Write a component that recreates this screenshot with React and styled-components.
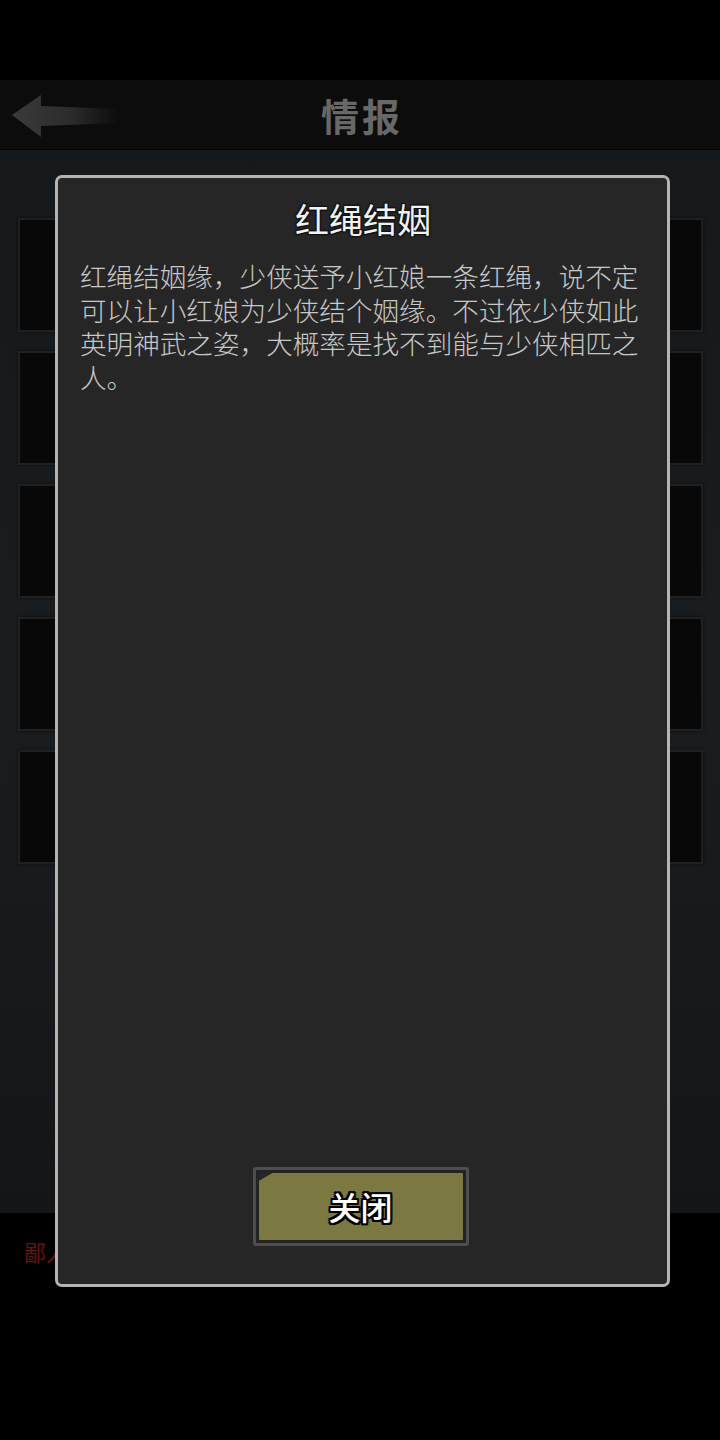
import styled, { createGlobalStyle } from 'styled-components'

const GlobalStyle = createGlobalStyle`
  html, body {
    margin: 0;
    padding: 0;
    background: #000;
  }
  * { box-sizing: border-box; }
`

const cjk = `"Noto Sans CJK SC", "Noto Sans", sans-serif`

const Screen = styled.div`
  position: relative;
  width: 720px;
  height: 1440px;
  display: flex;
  flex-direction: column;
  background: #000;
  overflow: hidden;
  font-family: ${cjk};
`

const StatusGap = styled.div`
  height: 80px;
  background: #000;
`

const Header = styled.div`
  height: 70px;
  display: flex;
  align-items: center;
  justify-content: center;
  position: relative;
  background: #0c0c0d;
  border-bottom: 1px solid #050505;
`

const BackButton = styled.div`
  position: absolute;
  left: 10px;
  top: 14px;
  width: 110px;
  height: 46px;
`

const Title = styled.h1`
  margin: 0 0 0 4px;
  font-size: 38px;
  font-weight: 700;
  letter-spacing: 3px;
  color: #686868;
`

const Content = styled.div`
  height: 1063px;
  padding: 68px 17px 0 18px;
  display: flex;
  flex-direction: column;
  gap: 19px;
  background: linear-gradient(180deg, #16191c 0%, #1a1d20 50%, #141517 100%);
`

const Card = styled.div`
  height: 114px;
  background: #080808;
  border: 2px solid #1f2021;
  box-shadow: 0 0 3px rgba(0, 0, 0, 0.6);
`

const Footer = styled.div`
  flex: 1;
  background: #000;
  padding: 22px 0 0 24px;
`

const RedNote = styled.span`
  font-size: 22px;
  color: #6a1212;
`

const Modal = styled.div`
  position: absolute;
  left: 55px;
  top: 175px;
  width: 615px;
  height: 1112px;
  background: #262626;
  border: 3px solid #b4b4b4;
  border-radius: 7px;
  display: flex;
  flex-direction: column;
  padding: 18px 26px 38px 22px;
`

const ModalTitle = styled.h2`
  margin: 0 0 0 5px;
  text-align: center;
  font-size: 34px;
  line-height: 46px;
  font-weight: 400;
  color: #f2f2f2;
  text-shadow: -1px -1px 0 #111, 1px -1px 0 #111, -1px 1px 0 #111, 1px 1px 0 #111,
    0 0 3px #000;
`

const Body = styled.p`
  margin: 17px 0 0;
  font-size: 26.6px;
  line-height: 33.6px;
  font-weight: 300;
  color: #c8c8c8;
  word-break: break-all;
`

const ButtonRow = styled.div`
  margin-top: auto;
  display: flex;
  justify-content: center;
`

const ButtonFrame = styled.div`
  width: 216px;
  height: 79px;
  border: 3px solid #4e4e4e;
  border-radius: 3px;
  padding: 3px;
  background: #232323;
`

const CloseButton = styled.button`
  position: relative;
  width: 100%;
  height: 100%;
  border: none;
  border-radius: 1px;
  background: #7b7941;
  display: flex;
  align-items: center;
  justify-content: center;
  font-family: ${cjk};
  font-size: 32px;
  font-weight: 500;
  color: #fff;
  padding: 0 0 2px 0;
  text-shadow: -2px -2px 0 #000, 2px -2px 0 #000, -2px 2px 0 #000, 2px 2px 0 #000,
    0 -2px 0 #000, 0 2px 0 #000, -2px 0 0 #000, 2px 0 0 #000;
  cursor: pointer;

  &::before {
    content: '';
    position: absolute;
    left: 0;
    top: 0;
    width: 14px;
    height: 8px;
    background: #262626;
    clip-path: polygon(0 0, 100% 0, 0 100%);
  }
`

function Arrow() {
  return (
    <svg width="110" height="46" viewBox="0 0 110 46">
      <defs>
        <linearGradient id="shaft" x1="0" y1="0" x2="1" y2="0">
          <stop offset="0" stopColor="#3a3a3a" />
          <stop offset="0.55" stopColor="#2c2c2c" />
          <stop offset="1" stopColor="#0c0c0d" />
        </linearGradient>
      </defs>
      <path d="M2 21 L31 1 L31 12 L108 15 L108 29 L31 32 L31 43 Z" fill="url(#shaft)" />
    </svg>
  )
}

export default function App() {
  return (
    <>
      <GlobalStyle />
      <Screen>
        <StatusGap />
        <Header>
          <BackButton>
            <Arrow />
          </BackButton>
          <Title>情报</Title>
        </Header>
        <Content>
          <Card />
          <Card />
          <Card />
          <Card />
          <Card />
        </Content>
        <Footer>
          <RedNote>鄙人</RedNote>
        </Footer>

        <Modal>
          <ModalTitle>红绳结姻</ModalTitle>
          <Body>
            红绳结姻缘，少侠送予小红娘一条红绳，说不定可以让小红娘为少侠结个姻缘。不过依少侠如此英明神武之姿，大概率是找不到能与少侠相匹之人。
          </Body>
          <ButtonRow>
            <ButtonFrame>
              <CloseButton>关闭</CloseButton>
            </ButtonFrame>
          </ButtonRow>
        </Modal>
      </Screen>
    </>
  )
}
